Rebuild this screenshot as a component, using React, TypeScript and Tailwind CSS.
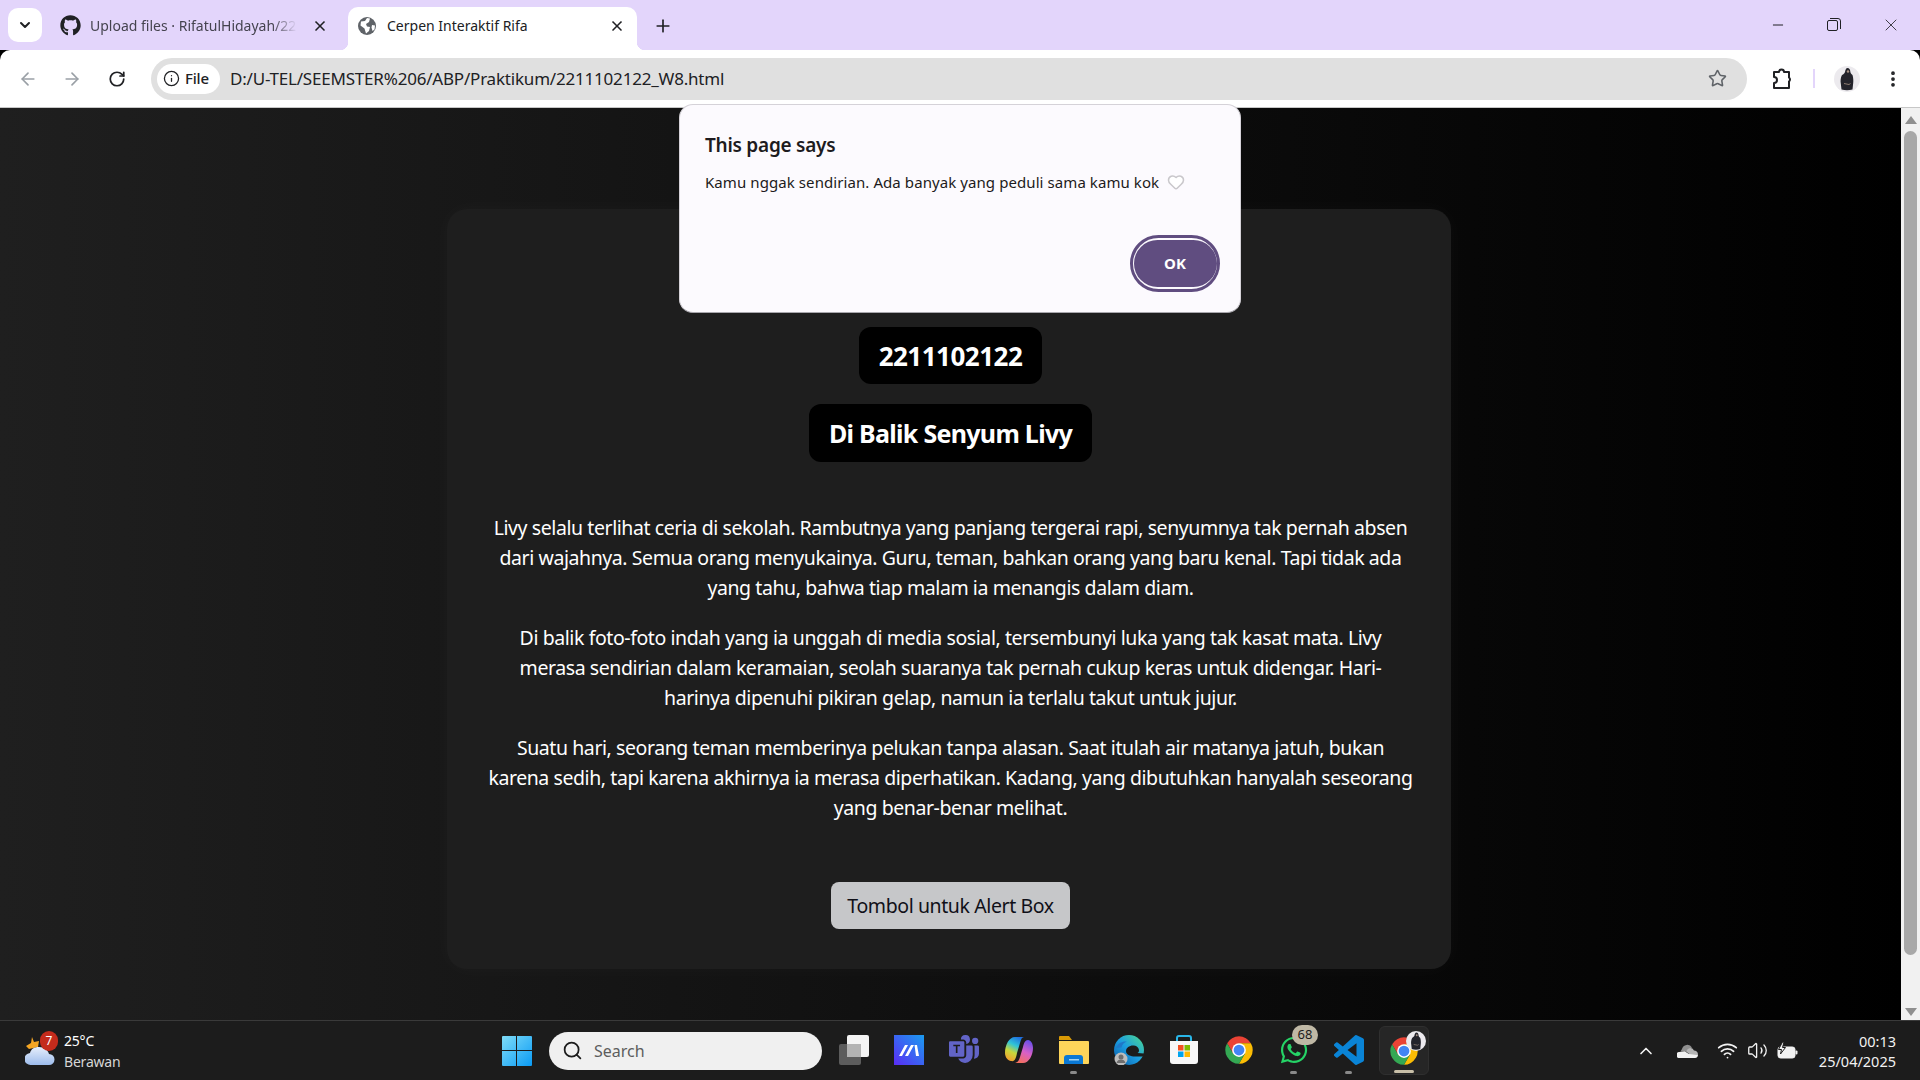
import { ArrowLeft, ArrowRight, ChevronDown, ChevronUp, EllipsisVertical, Heart, Info, Minus, Plus, RotateCw, Search, Star, Volume2, Wifi, X } from 'lucide-react'
import { FaGithub, FaWhatsapp } from 'react-icons/fa'
import { BsMicrosoftTeams } from 'react-icons/bs'

const paragraphs = [
  [
    'Livy selalu terlihat ceria di sekolah. Rambutnya yang panjang tergerai rapi, senyumnya tak pernah absen',
    'dari wajahnya. Semua orang menyukainya. Guru, teman, bahkan orang yang baru kenal. Tapi tidak ada',
    'yang tahu, bahwa tiap malam ia menangis dalam diam.',
  ],
  [
    'Di balik foto-foto indah yang ia unggah di media sosial, tersembunyi luka yang tak kasat mata. Livy',
    'merasa sendirian dalam keramaian, seolah suaranya tak pernah cukup keras untuk didengar. Hari-',
    'harinya dipenuhi pikiran gelap, namun ia terlalu takut untuk jujur.',
  ],
  [
    'Suatu hari, seorang teman memberinya pelukan tanpa alasan. Saat itulah air matanya jatuh, bukan',
    'karena sedih, tapi karena akhirnya ia merasa diperhatikan. Kadang, yang dibutuhkan hanyalah seseorang',
    'yang benar-benar melihat.',
  ],
]

function ChromeLogo({ size = 30 }: { size?: number }) {
  return (
    <svg width={size} height={size} viewBox="0 0 48 48">
      <path d="M14.5 29.5 5 13A22 22 0 0 1 43 13H24Z" fill="#ea4335" />
      <path d="M24 13H43A22 22 0 0 1 24 46L33.5 29.5Z" fill="#fbbc04" />
      <path d="M33.5 29.5 24 46A22 22 0 0 1 5 13L14.5 29.5Z" fill="#34a853" />
      <circle cx="24" cy="24" r="11" fill="#fff" />
      <circle cx="24" cy="24" r="8.6" fill="#4285f4" />
    </svg>
  )
}

function Avatar({ size = 26 }: { size?: number }) {
  return (
    <svg width={size} height={size} viewBox="0 0 26 26">
      <circle cx="13" cy="13" r="13" fill="#eceaee" />
      <path d="M13.500 2c1.700 0 2.700 1.500 2.800 3.500.1 1.500 1 2.500 2.200 3.500.8 2.500 1 6 .7 8l-.7 6.500c-3.500 1-7.500 1-11 0l-.7-6c-.5-2.500-.2-6 1.200-8.500 1.500-.8 2.500-1.500 3-3 .4-2.300 1-4 2.500-4Z" fill="#23232b" />
      <circle cx="14" cy="5.500" r="1.200" fill="#a89284" />
      <path d="M10 17.500l5 1 1.500-1" fill="none" stroke="#8d7b70" strokeWidth="1" />
    </svg>
  )
}

function Globe() {
  return (
    <svg width="20" height="20" viewBox="0 0 20 20">
      <circle cx="10" cy="10" r="9" fill="#5f6368" />
      <path d="M4 5.500 8 5l2-3 3 .5L12 6 9 8l1 2.500 3 .5-1 4-3 2.500-1.500-5L3.500 9.500ZM15 9l3 .5-.500 4-2 1.500-1-3.500Z" fill="#fff" />
    </svg>
  )
}

function Puzzle() {
  return (
    <svg width="24" height="24" viewBox="0 0 24 24" fill="none" stroke="#202124" strokeWidth="2" strokeLinejoin="round">
      <path d="M4 5h5a2.500 2.500 0 0 1 5 0h5v5.500a2.500 2.500 0 0 1 0 4V21H4v-5a3 3 0 0 0 0-6Z" />
    </svg>
  )
}

function WindowsLogo() {
  return (
    <svg width="30" height="30" viewBox="0 0 30 30">
      <defs>
        <linearGradient id="win" x1="0" y1="0" x2="1" y2="1">
          <stop offset="0" stopColor="#7fdcf7" />
          <stop offset="1" stopColor="#0a9bf5" />
        </linearGradient>
      </defs>
      <path d="M0 1a1 1 0 0 1 1-1h13v14H0ZM15 0h14a1 1 0 0 1 1 1v13H15ZM0 15h14v15H1a1 1 0 0 1-1-1ZM15 15h15v14a1 1 0 0 1-1 1H15Z" fill="url(#win)" />
    </svg>
  )
}

function TaskView() {
  return (
    <svg width="30" height="30" viewBox="0 0 30 30">
      <rect x="0" y="9" width="22" height="21" rx="2" fill="#5c5c5c" />
      <rect x="8" y="0" width="22" height="22" rx="2" fill="#f4f4f4" />
      <rect x="8" y="9" width="14" height="13" fill="#b3b3b3" />
    </svg>
  )
}

function MathApp() {
  return (
    <svg width="30" height="30" viewBox="0 0 30 30">
      <defs>
        <linearGradient id="mapp" x1="0" y1="1" x2="1" y2="0">
          <stop offset="0" stopColor="#5a2cf5" />
          <stop offset="1" stopColor="#1a9cf0" />
        </linearGradient>
      </defs>
      <rect width="30" height="30" fill="url(#mapp)" />
      <path d="M5 21 11 10h3L8 21ZM11 21l6-11h3l-6 11ZM20.500 10H23l2 11h-3Z" fill="#fff" />
    </svg>
  )
}

function Copilot() {
  return (
    <svg width="30" height="30" viewBox="0 0 30 30">
      <defs>
        <linearGradient id="cop1" x1="0.700" y1="0" x2="0.300" y2="1">
          <stop offset="0" stopColor="#1f6fe0" />
          <stop offset=".35" stopColor="#2fc4d8" />
          <stop offset=".65" stopColor="#c8d83a" />
          <stop offset="1" stopColor="#f2a030" />
        </linearGradient>
        <linearGradient id="cop2" x1="0.700" y1="0" x2="0.300" y2="1">
          <stop offset="0" stopColor="#6a50e8" />
          <stop offset=".5" stopColor="#d860c8" />
          <stop offset="1" stopColor="#f5705a" />
        </linearGradient>
      </defs>
      <path d="M11 2h9c-2 0-3 2-4 6l-3 10c-1 5-2 9-6 8-3-.5-6-3.500-6-8C1 10 5 2 11 2Z" fill="url(#cop1)" />
      <path d="M19 28h-9c3 0 5-2 6-6l3-10c1-4 2-7 5-7 3 .5 5 3.500 5 8 0 7-4 15-10 15Z" fill="url(#cop2)" />
    </svg>
  )
}

function Explorer() {
  return (
    <svg width="30" height="30" viewBox="0 0 30 30">
      <path d="M0 2a1 1 0 0 1 1-1h9l3 4h-13Z" fill="#d99a05" />
      <path d="M0 6h29a1 1 0 0 1 1 1v21a1 1 0 0 1-1 1H1a1 1 0 0 1-1-1Z" fill="#fdd55a" />
      <path d="M5 29v-6a3 3 0 0 1 3-3h13a3 3 0 0 1 3 3v6Z" fill="#0a78d4" />
      <rect x="10" y="24" width="10" height="1.500" fill="#9fd3f5" />
    </svg>
  )
}

function Edge() {
  return (
    <svg width="30" height="30" viewBox="0 0 30 30">
      <defs>
        <linearGradient id="edg" x1="0" y1="1" x2="1" y2="0">
          <stop offset="0" stopColor="#0c59a4" />
          <stop offset=".5" stopColor="#1b9de2" />
          <stop offset="1" stopColor="#4fdc8a" />
        </linearGradient>
      </defs>
      <circle cx="15" cy="15" r="15" fill="url(#edg)" />
      <path d="M12 16c0-3.500 4-6 8-5.500 3 .3 5 2.500 5 5 0 1-.5 2-1.500 2.500l6.500.5v3H21c-4 0-9-1.500-9-5.500Z" fill="#1c1c1c" />
      <path d="M2 13c2-5 6-7 11-6.500-3 1-5 3-5.500 6Z" fill="#1f78c8" />
      <circle cx="7" cy="24" r="6.500" fill="#bdbdbd" />
      <circle cx="7" cy="22" r="2.500" fill="#6e6e6e" />
      <path d="M2.500 28c.5-2.500 2.500-3.500 4.500-3.500s4 1 4.500 3.500Z" fill="#6e6e6e" />
    </svg>
  )
}

function StoreBag() {
  return (
    <svg width="30" height="30" viewBox="0 0 30 30">
      <path d="M8 6V3a2 2 0 0 1 2-2h10a2 2 0 0 1 2 2v3" fill="none" stroke="#29b6e8" strokeWidth="2" />
      <path d="M1 6h28v20a3 3 0 0 1-3 3H4a3 3 0 0 1-3-3Z" fill="#f7f7f7" />
      <rect x="9" y="10" width="5.500" height="5.500" fill="#f25022" />
      <rect x="15.500" y="10" width="5.500" height="5.500" fill="#7fba00" />
      <rect x="9" y="16.500" width="5.500" height="5.500" fill="#00a4ef" />
      <rect x="15.500" y="16.500" width="5.500" height="5.500" fill="#ffb900" />
    </svg>
  )
}

function VSCode() {
  return (
    <svg width="30" height="30" viewBox="0 0 24 24">
      <path
        d="M23.150 2.587 18.210.21a1.494 1.494 0 0 0-1.705.29l-9.460 8.630-4.120-3.128a.999.999 0 0 0-1.276.057L.327 7.261A1 1 0 0 0 .326 8.740L3.899 12 .326 15.260a1 1 0 0 0 .001 1.479L1.650 17.940a.999.999 0 0 0 1.276.057l4.120-3.128 9.460 8.630a1.492 1.492 0 0 0 1.704.29l4.942-2.377A1.500 1.500 0 0 0 24 20.060V3.939a1.500 1.500 0 0 0-.850-1.352zm-5.146 14.861L10.826 12l7.178-5.448v10.896z"
        fill="#0a84d6"
      />
    </svg>
  )
}

function Weather() {
  return (
    <svg width="30" height="30" viewBox="0 0 30 30">
      <path d="M7 1 9 6l5-1-1 6-9 2-3-3 5-3Z" fill="#f5a623" />
      <defs>
        <linearGradient id="cld" x1="0" y1="0" x2="0" y2="1">
          <stop offset="0" stopColor="#e6eefb" />
          <stop offset="1" stopColor="#9dbcec" />
        </linearGradient>
      </defs>
      <path d="M6 29a6 6 0 0 1-1-12c1-4 4-6 9-6 5 0 9 3 10 7a5.500 5.500 0 0 1 0 11Z" fill="url(#cld)" />
    </svg>
  )
}

function OneDrive() {
  return (
    <svg width="21" height="14" viewBox="0 0 21 14">
      <path d="M5 5a5.500 5.500 0 0 1 10-1.500L8 8l-4.500-.5Z" fill="#8f8f8f" />
      <path d="M9 7.500c2-4 6-5 8-1 2 0 4 1.500 4 4H13Z" fill="#b5b5b5" />
      <path d="M3 14a3 3 0 0 1-1-6l6-.5 4 2.500 9 0.500c0 2-1 3.500-3 3.500Z" fill="#f2f2f2" />
    </svg>
  )
}

function BatteryCharge() {
  return (
    <svg width="21" height="18" viewBox="0 0 21 18">
      <rect x="1" y="5" width="17" height="11" rx="2.500" fill="#f2f2f2" stroke="#f2f2f2" />
      <rect x="18.500" y="8.500" width="2" height="4" rx="1" fill="#f2f2f2" />
      <path d="M5.500 0 1.500 7.500h3L3.500 12l5-6.500H5.500L7 0Z" fill="#f2f2f2" stroke="#1c1c1c" strokeWidth="1" />
    </svg>
  )
}

export default function App() {
  return (
    <div className="relative flex h-screen w-full flex-col overflow-hidden bg-black font-['Noto_Sans',sans-serif]">
      {/* Tab strip */}
      <div className="flex h-[50px] shrink-0 items-end bg-[#e3d5fb] pl-2">
        <button className="mb-2 flex h-[34px] w-[34px] items-center justify-center rounded-[10px] bg-white">
          <ChevronDown size={16} strokeWidth={3} color="#202124" />
        </button>
        <div className="flex h-[43px] w-[306px] items-center pb-[6px] pl-[18px]">
          <FaGithub size={21} color="#202124" className="shrink-0" />
          <span className="ml-[9px] w-[207px] overflow-hidden whitespace-nowrap text-[14px] text-[#45434f] [mask-image:linear-gradient(to_right,black_88%,transparent)]">
            Upload files · RifatulHidayah/22
          </span>
          <X size={16} strokeWidth={2.5} color="#202124" className="ml-[15px] shrink-0" />
        </div>
        <div className="relative flex h-[43px] w-[289px] items-center rounded-t-[10px] bg-white pb-[6px] pl-[9px]">
          <div className="absolute bottom-0 left-[-8px] h-2 w-2 bg-[radial-gradient(circle_at_0_0,transparent_8px,white_8.5px)]" />
          <div className="absolute bottom-0 right-[-8px] h-2 w-2 bg-[radial-gradient(circle_at_100%_0,transparent_8px,white_8.5px)]" />
          <Globe />
          <span className="ml-[10px] w-[220px] overflow-hidden whitespace-nowrap text-[14px] text-[#202124]">Cerpen Interaktif Rifa</span>
          <X size={16} strokeWidth={2.5} color="#202124" className="ml-[2px] shrink-0" />
        </div>
        <div className="mb-[14px] ml-[16px] flex h-5 w-5 items-center justify-center">
          <Plus size={20} strokeWidth={2} color="#202124" />
        </div>
        {/* Window controls */}
        <div className="mb-[15px] ml-auto flex h-[20px] items-center pr-[19px]">
          <Minus size={16} strokeWidth={1.500} color="#202124" />
          <svg width="14" height="14" viewBox="0 0 14 14" fill="none" stroke="#202124" className="ml-[41px]">
            <rect x="0.500" y="2.500" width="10" height="10" rx="1.500" />
            <path d="M3 .5h8a2.500 2.500 0 0 1 2.500 2.500v8" />
          </svg>
          <X size={20} strokeWidth={1} color="#202124" className="ml-[40px]" />
        </div>
      </div>

      {/* Toolbar */}
      <div className="flex h-[58px] shrink-0 items-center rounded-t-[10px] border-b border-[#c7c7c7] bg-white">
        <ArrowLeft size={20} color="#9aa0a6" strokeWidth={2} className="ml-[18px]" />
        <ArrowRight size={20} color="#9aa0a6" strokeWidth={2} className="ml-[24px]" />
        <RotateCw size={18} color="#202124" strokeWidth={2.300} className="ml-[26px]" />
        <div className="ml-[25px] flex h-[42px] w-[1596px] items-center rounded-full bg-[#e0e0e0] pl-[6px] pr-[20px]">
          <div className="flex h-[30px] w-[63px] items-center rounded-full bg-white pl-[6px]">
            <Info size={17} color="#202124" strokeWidth={1.800} />
            <span className="ml-[5px] text-[15px] font-medium tracking-[-0.2px] text-[#202124]">File</span>
          </div>
          <span className="ml-[10px] whitespace-nowrap pt-[1px] text-[17px] tracking-[-0.2px] text-[#202124]">D:/U-TEL/SEEMSTER%206/ABP/Praktikum/2211102122_W8.html</span>
          <Star size={19} color="#5f6368" strokeWidth={2} className="ml-auto" />
        </div>
        <div className="ml-[23px]">
          <Puzzle />
        </div>
        <div className="ml-[19px] h-[19px] w-[2px] bg-[#e3d5fb]" />
        <div className="ml-[19px]">
          <Avatar />
        </div>
        <EllipsisVertical size={20} color="#202124" strokeWidth={2.500} className="ml-[23px]" />
      </div>

      {/* Page area */}
      <div className="flex min-h-0 flex-1">
        <main className="flex min-w-0 flex-1 justify-center overflow-hidden bg-[linear-gradient(to_right,#1f1f1f,#000000)] pr-[3px] pt-[101px]">
          <div className="flex h-[760px] w-[1004px] flex-col items-center rounded-[20px] bg-[#1e1e1e] pl-[3px] pt-[118px] text-white shadow-[0_0_20px_rgba(255,255,255,0.03)]">
            <div className="rounded-[12px] bg-black px-[20px] pt-[10px] pb-[8px] text-[26px] leading-[39px] font-bold tracking-[-0.5px]">2211102122</div>
            <div className="mt-[20px] rounded-[12px] bg-black px-[20px] pt-[9px] pb-[9px] text-[25px] leading-[40px] font-bold tracking-[-0.7px]">Di Balik Senyum Livy</div>
            <div className="mt-[51px] flex flex-col gap-5 text-center text-[19.5px] leading-[30px] tracking-[-0.42px]">
              {paragraphs.map((lines, i) => (
                <p key={i}>
                  {lines.map((line, j) => (
                    <span key={j} className="block whitespace-nowrap">
                      {line}
                    </span>
                  ))}
                </p>
              ))}
            </div>
            <button className="mt-[59px] h-[47px] w-[239px] rounded-[8px] bg-[#c6c7c9] text-[19.5px] tracking-[-0.4px] text-[#101018]">Tombol untuk Alert Box</button>
          </div>
        </main>
        {/* Scrollbar */}
        <div className="flex w-[19px] shrink-0 flex-col items-center bg-[#f1f1f1] pt-[8px] pb-[4px]">
          <div className="h-0 w-0 border-x-[6px] border-b-[8px] border-x-transparent border-b-[#8f8f8f]" />
          <div className="mt-[7px] h-[824px] w-[13px] rounded-full bg-[#a8a8a8]" />
          <div className="mt-auto h-0 w-0 border-x-[6px] border-t-[8px] border-x-transparent border-t-[#8f8f8f]" />
        </div>
      </div>

      {/* Taskbar */}
      <div className="flex h-[60px] shrink-0 items-center border-t border-[#3a3a3a] bg-[#1c1c1c] text-white">
        <div className="flex w-[502px] shrink-0 items-center pl-[25px]">
          <div className="relative h-[30px] w-[30px]">
            <Weather />
            <div className="absolute left-[15px] top-[-5px] flex h-[20px] w-[18px] items-center justify-center rounded-full bg-[#c42b1c] text-[12px] text-white">7</div>
          </div>
          <div className="ml-[9px] text-[14px] leading-[21px] tracking-[-0.2px]">
            <div>25°C</div>
            <div className="text-[#d6d6d6]">Berawan</div>
          </div>
        </div>
        <WindowsLogo />
        <div className="ml-[17px] flex h-[38px] w-[273px] items-center rounded-full bg-[#f0f0f0] pl-[13px]">
          <Search size={21} color="#1c1c1c" strokeWidth={2} />
          <span className="ml-[11px] text-[16px] text-[#5d5d5d]">Search</span>
        </div>
        <div className="ml-[4px] flex items-center">
          {[<TaskView />, <MathApp />, <BsMicrosoftTeams size={30} color="#6264c7" />, <Copilot />, <Explorer />, <Edge />, <StoreBag />, <ChromeLogo />, <FaWhatsapp size={30} color="#25d366" />, <VSCode />].map((icon, i) => (
            <div key={i} className="relative flex h-[49px] w-[55px] items-center justify-center pb-[1px]">
              {icon}
              {(i === 4 || i === 8 || i === 9) && <div className="absolute bottom-[1px] h-[3px] w-[7px] rounded-full bg-[#8a8a8a]" />}
              {i === 8 && <div className="absolute right-[3px] top-[-1px] flex h-[20px] w-[26px] items-center justify-center rounded-full bg-[#bfb8a5] text-[13px] text-[#1c1c1c]">68</div>}
            </div>
          ))}
          <div className="relative ml-[3px] flex h-[49px] w-[50px] items-center justify-center rounded-[6px] border border-[#2f2f2f] bg-[#262626]">
            <ChromeLogo />
            <div className="absolute right-[2px] top-[4px]">
              <Avatar size={20} />
            </div>
            <div className="absolute bottom-[1px] h-[3px] w-[20px] rounded-full bg-[#c8bfa8]" />
          </div>
        </div>
        <div className="ml-auto flex items-center pr-[24px]">
          <ChevronUp size={20} color="#f2f2f2" strokeWidth={2} />
          <div className="ml-[21px]">
            <OneDrive />
          </div>
          <Wifi size={21} color="#f2f2f2" strokeWidth={2} className="ml-[19px]" />
          <Volume2 size={21} color="#f2f2f2" strokeWidth={1.500} className="ml-[9px]" />
          <div className="ml-[9px]">
            <BatteryCharge />
          </div>
          <div className="ml-[21px] text-right text-[14.5px] leading-[20px] text-[#f2f2f2]">
            <div>00:13</div>
            <div>25/04/2025</div>
          </div>
        </div>
      </div>

      {/* Alert dialog */}
      <div className="absolute left-[679px] top-[104px] h-[209px] w-[562px] rounded-[14px] border border-[#d5d2d8] border-b-[#a9a7ad] bg-[#fcfafe] pl-[25px] pt-[25px]">
        <div className="text-[19px] leading-[30px] font-semibold tracking-[-0.25px] text-[#1d1b20]">This page says</div>
        <div className="mt-[11px] flex items-center text-[15px] leading-[22px] tracking-[0.08px] text-[#1d1b20]">
          Kamu nggak sendirian. Ada banyak yang peduli sama kamu kok
          <Heart size={18} color="#c9c7cb" fill="#ffffff" className="ml-[8px]" />
        </div>
        <div className="absolute right-[20px] bottom-[20px] flex h-[57px] w-[90px] items-center justify-center rounded-full border-[3px] border-[#604d80] bg-[#fcfafe]">
          <button className="h-[47px] w-[83px] rounded-full bg-[#604d80] text-[15px] font-bold text-white">OK</button>
        </div>
      </div>
    </div>
  )
}
